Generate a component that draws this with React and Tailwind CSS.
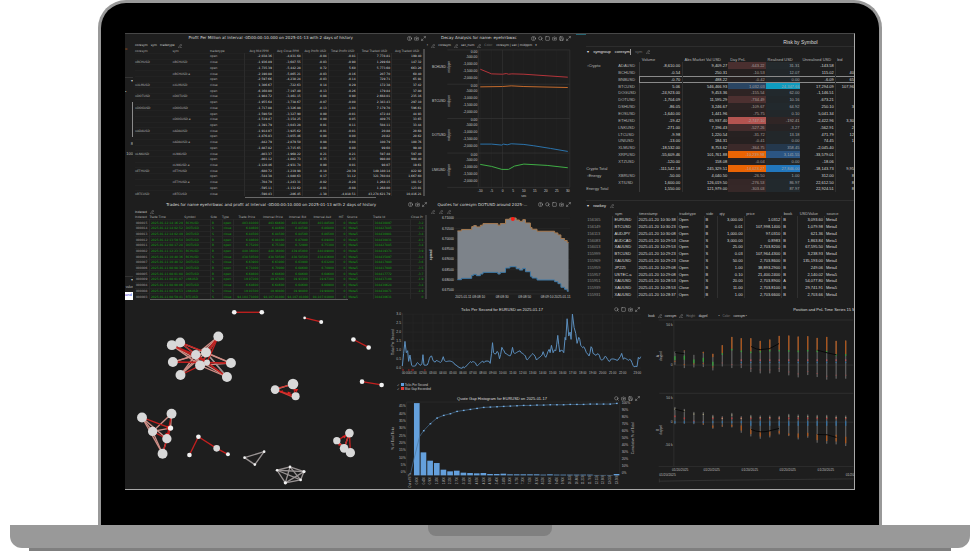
import React from 'react';
import { Camera, CircleHelp, Maximize2, PencilLine, Save, Search, Square } from 'lucide-react';

const icons = {
  help: CircleHelp,
  search: Search,
  square: Square,
  camera: Camera,
  save: Save,
  expand: Maximize2,
};

const profitHeaders = ['Avg Mid PPM', 'Avg Close PPM', 'Avg Profit USD', 'Total Profit USD', 'Total Traded USD', 'Avg Traded USD'];

const profitRows = [
  ['', '', 'open', '-2,038.36', '-4,831.68', '-0.04', '-0.81', '7,778.81', '199.40'],
  ['BCHUSD', 'BCHUSD', 'close', '-1,936.89', '-3,607.55', '-0.03', '-0.90', '1,299.68', '147.32'],
  ['', '', 'open', '-1,735.39', '-5,442.28', '0.72', '5.60', '5,773.60', '663.26'],
  ['', 'BCHUSD.a', 'close', '-2,190.88', '-5,865.21', '-0.03', '-0.16', '207.70', '60.40'],
  ['', '', 'open', '-2,597.66', '-4,230.24', '-0.03', '-0.14', '729.71', '65.91'],
  ['XLMUSD', 'XLMUSD', 'close', '1,306.67', '-722.63', '0.14', '0.29', '172.38', '37.42'],
  ['', '', 'open', '-6,160.80', '-7,197.40', '-0.13', '-0.26', '179.84', '37.80'],
  ['DOTUSD', 'DOTUSD', 'close', '-1,984.72', '-3,461.15', '0.08', '0.90', '2,668.01', '235.16'],
  ['', '', 'open', '-1,955.64', '-3,738.67', '-0.07', '-0.00', '2,383.43', '297.10'],
  ['DOGUSD', 'DOGUSD', 'close', '-1,717.88', '-3,326.88', '-0.13', '-1.04', '7,179.70', '596.61'],
  ['', '', 'open', '-1,590.50', '-3,327.90', '0.00', '-0.01', '472.44', '44.93'],
  ['', 'DOGUSD.a', 'close', '-1,519.47', '-3,154.25', '0.00', '0.05', '409.75', '33.65'],
  ['', '', 'open', '-1,391.79', '-3,043.28', '0.01', '0.11', '504.11', '33.44'],
  ['ADAUSD', 'ADAUSD', 'close', '-1,914.07', '-3,925.62', '-0.01', '-0.01', '20.88', '20.68'],
  ['', '', 'open', '-1,876.83', '-3,055.46', '0.00', '0.00', '20.82', '20.62'],
  ['', 'ADAUSD.a', 'close', '-842.79', '-2,879.50', '0.08', '0.08', '100.79', '100.76'],
  ['', '', 'open', '-1,887.82', '-3,715.65', '0.00', '0.00', '99.60', '99.40'],
  ['LNKUSD', 'LNKUSD', 'close', '-803.37', '-1,968.22', '0.21', '0.21', '597.48', '597.40'],
  ['', '', 'open', '-801.12', '-1,802.73', '0.35', '0.35', '998.80', '998.40'],
  ['', 'LNKUSD.a', 'close', '-1,120.46', '-2,931.74', '0.00', '0.01', '98.07', '19.61'],
  ['ETHUSD', 'ETHUSD', 'close', '-680.72', '-1,219.98', '-0.18', '-28.39', '149,180.14', '822.92'],
  ['', '', 'open', '-544.38', '-1,080.63', '0.17', '31.12', '321,760.04', '1,667.60'],
  ['', 'ETHUSD.a', 'close', '-704.79', '-1,243.31', '-0.02', '-0.28', '1,268.15', '101.52'],
  ['', '', 'open', '-595.11', '-1,132.62', '-0.01', '-0.08', '1,268.00', '123.01'],
  ['BTCUSD', 'BTCUSD', 'close', '-590.43', '-286.45', '-1.38', '-4,818.51', '43,274,621.79', '10,416.21'],
];

const tradeHeaders = ['Indexed', 'Trade Time', 'Symbol', 'Side', 'Type', 'Trade Price', 'Interval Price', 'Interval Bid', 'Interval Ask', 'HIT', 'Source', 'Trade Id', 'Close Pr'];

const tradeRows = [
  ['000015', '2025-01-12 14:16:29', 'BCHUSD', 'B', 'open', '403.81000', '403.68600', '403.85000', '403.88500', '0', 'Meta5', '304430897', '-3.2'],
  ['000014', '2025-01-12 14:02:52', 'DOTUSD', 'S', 'close', '6.84600', '6.84600', '6.84500', '6.86800', '0', 'Meta5', '304427885', '-3.4'],
  ['000013', '2025-01-12 14:02:49', 'DOTUSD', 'S', 'close', '6.84500', '6.84500', '6.84500', '6.86500', '0', 'Meta5', '304430901', '-3.4'],
  ['000012', '2025-01-12 13:59:54', 'DOTUSD', 'B', 'open', '6.88600', '6.88400', '6.87000', '6.89400', '0', 'Meta5', '304430831', '-4.1'],
  ['000011', '2025-01-12 08:17:28', 'DOTUSD', 'B', 'open', '6.75200', '6.75300', '6.72900', '6.75300', '0', 'Meta5', '304427885', '-3.4'],
  ['000002', '2025-01-11 12:23:31', 'BCHUSD', 'B', 'open', '440.36000', '440.36000', '439.85000', '440.89000', '0', 'Meta5', '304419374', '-3.9'],
  ['000001', '2025-01-11 10:40:36', 'BCHUSD', 'S', 'close', '438.50500', '438.50500', '438.50500', '438.83600', '0', 'Meta5', '304435897', '-3.4'],
  ['000007', '2025-01-11 10:40:32', 'DOTUSD', 'S', 'close', '6.63900', '6.63900', '6.63900', '6.63200', '0', 'Meta5', '304417980', '-3.6'],
  ['000006', '2025-01-11 08:08:39', 'DOTUSD', 'B', 'open', '6.71000', '6.70900', '6.68600', '6.70900', '0', 'Meta5', '304417980', '-3.5'],
  ['000005', '2025-01-11 08:01:08', 'DOTUSD', 'B', 'open', '6.68600', '6.68600', '6.68600', '6.68600', '0', 'Meta5', '304417772', '-3.7'],
  ['000009', '2025-01-11 08:01:07', 'LNKUSD', 'B', 'open', '19.97200', '19.97800', '19.93300', '19.97300', '0', 'Meta5', '304437108', '-1.9'],
  ['000004', '2025-01-11 08:00:06', 'DOTUSD', 'S', 'close', '6.64600', '6.64600', '6.64600', '6.66900', '0', 'Meta5', '304430624', '-3.4'],
  ['000008', '2025-01-11 08:59:53', 'LNKUSD', 'S', 'close', '19.91500', '19.90800', '19.90800', '19.90800', '0', 'Meta5', '304430871', '-1.9'],
  ['000003', '2025-01-11 08:59:41', 'BTCUSD', 'S', 'close', '94,104.71000', '94,107.01000', '94,107.01000', '94,107.01000', '0', 'Meta5', '304430631', '0'],
];

const riskRows = [
  { group: 'Crypto', sym: 'ADAUSD', volume: '-8,610.00', abs: '9,409.27', day: '-643.22', dayBg: 'bg-[#4a2f2f]', real: '31.31', realBg: 'bg-[#23292c]', unreal: '-143.58', bid: '' },
  { sym: 'BCHUSD', volume: '-0.54', abs: '250.31', day: '-10.53', dayBg: 'bg-[#262020]', real: '12.07', realBg: 'bg-[#22272a]', unreal: '115.02', bid: '40' },
  { sym: 'BNBUSD', volume: '-0.70', abs: '488.22', day: '-0.42', dayBg: 'bg-[#262020]', real: '0.00', realBg: 'bg-[#22272a]', unreal: '-6.09', bid: '65', selected: true },
  { sym: 'BTCUSD', volume: '5.06', abs: '546,466.93', day: '1,032.03', dayBg: 'bg-[#2a4563]', real: '24,347.66', realBg: 'bg-[#0f9cbf]', unreal: '17,294.09', bid: '107,96' },
  { sym: 'DOGUSD', volume: '-24,923.00', abs: '9,453.36', day: '-155.54', dayBg: 'bg-[#2e2424]', real: '62.00', realBg: 'bg-[#22292d]', unreal: '-1,146.51', bid: '' },
  { sym: 'DOTUSD', volume: '-1,704.09', abs: '11,595.29', day: '-734.49', dayBg: 'bg-[#4c3030]', real: '10.16', realBg: 'bg-[#22272a]', unreal: '-673.21', bid: '' },
  { sym: 'DSHUSD', volume: '-86.05', abs: '3,246.67', day: '-109.67', dayBg: 'bg-[#2c2323]', real: '64.92', realBg: 'bg-[#22292d]', unreal: '250.10', bid: '3' },
  { sym: 'EOSUSD', volume: '-1,640.00', abs: '1,441.96', day: '-75.75', dayBg: 'bg-[#292121]', real: '0.10', realBg: 'bg-[#22272a]', unreal: '5,041.34', bid: '' },
  { sym: 'ETHUSD', volume: '-19.42', abs: '65,937.40', day: '-2,747.10', dayBg: 'bg-[#b35450]', real: '-192.41', realBg: 'bg-[#302525]', unreal: '-2,422.96', bid: '3,30' },
  { sym: 'LNKUSD', volume: '-271.00', abs: '7,196.43', day: '-527.26', dayBg: 'bg-[#432c2c]', real: '-3.27', realBg: 'bg-[#262324]', unreal: '-562.91', bid: '2' },
  { sym: 'LTCUSD', volume: '-9.98', abs: '1,220.54', day: '-31.72', dayBg: 'bg-[#272121]', real: '13.18', realBg: 'bg-[#22272a]', unreal: '471.79', bid: '12' },
  { sym: 'UNIUSD', volume: '-13.00', abs: '184.31', day: '-0.41', dayBg: 'bg-[#262020]', real: '0.00', realBg: 'bg-[#22272a]', unreal: '74.45', bid: '1' },
  { sym: 'XLMUSD', volume: '-18,532.00', abs: '8,753.62', day: '-364.75', dayBg: 'bg-[#3b2929]', real: '358.45', realBg: 'bg-[#24384d]', unreal: '-2,045.40', bid: '' },
  { sym: 'XRPUSD', volume: '-55,609.46', abs: '101,761.88', day: '-10,239.98', dayBg: 'bg-[#ea6404]', real: '3,141.55', realBg: 'bg-[#2b5583]', unreal: '-33,579.01', bid: '' },
  { sym: 'XTZUSD', volume: '-120.00', abs: '158.08', day: '-0.04', dayBg: 'bg-[#262020]', real: '0.00', realBg: 'bg-[#22272a]', unreal: '-18.06', bid: '' },
  { group: 'Crypto Total', total: true, sym: '', volume: '-111,542.18', abs: '245,329.51', day: '-14,023.27', dayBg: 'bg-[#ea6404]', real: '27,846.00', realBg: 'bg-[#2277bd]', unreal: '-18,143.73', bid: '9,95' },
  { group: 'Energy', sym: 'XBRUSD', volume: '-50.00', abs: '4,040.50', day: '-26.50', dayBg: 'bg-[#272121]', real: '1.00', realBg: 'bg-[#22272a]', unreal: '312.00', bid: '8' },
  { sym: 'XTIUSD', volume: '1,600.00', abs: '126,019.50', day: '-276.53', dayBg: 'bg-[#352727]', real: '86.97', realBg: 'bg-[#22292d]', unreal: '22,612.50', bid: '8' },
  { group: 'Energy Total', total: true, sym: '', volume: '1,550.00', abs: '121,979.00', day: '-303.03', dayBg: 'bg-[#362828]', real: '87.97', realBg: 'bg-[#22292d]', unreal: '22,924.51', bid: '8' },
];

const orderHeaders = ['', 'sym', 'timestamp', 'tradetype', 'side', 'qty', 'price', 'book', 'USDValue', 'source'];

const orderRows = [
  ['156165', 'EURUSD', '2025-01-20 10:30:38', 'Open', 'B', '3,000.00', '1.0312', 'B', '3,093.60', 'Meta4'],
  ['156149', 'BTCUSD', '2025-01-20 10:30:23', 'Open', 'B', '0.01', '107,998.1400', 'B', '1,079.98', 'Meta4'],
  ['156113', 'AUDJPY', '2025-01-20 10:30:08', 'Open', 'B', '1,000.00', '97.0310', 'B', '621.36', 'Meta4'],
  ['156083', 'AUDCAD', '2025-01-20 10:29:53', 'Close', 'S', '3,000.00', '0.8983', 'B', '1,863.84', 'Meta1'],
  ['156013', 'XAUUSD', '2025-01-20 10:29:53', 'Open', 'S', '25.00', '2,703.8200', 'B', '67,595.50', 'Meta4'],
  ['155999', 'BTCUSD', '2025-01-20 10:29:23', 'Open', 'S', '0.03', '107,964.4300', 'B', '3,238.93', 'Meta4'],
  ['155969', 'XAUUSD', '2025-01-20 10:29:23', 'Close', 'S', '50.00', '2,703.8600', 'B', '135,193.00', 'Meta4'],
  ['155959', 'JP225', '2025-01-20 10:29:08', 'Open', 'S', '1.00', '38,893.2900', 'B', '249.06', 'Meta4'],
  ['155957', 'USTEC.a', '2025-01-20 10:29:08', 'Open', 'B', '0.10', '21,400.2400', 'B', '2,140.02', 'Meta5'],
  ['155951', 'XAUUSD', '2025-01-20 10:28:53', 'Open', 'S', '20.00', '2,703.8900', 'A', '54,077.80', 'Meta4'],
  ['155939', 'XAUUSD', '2025-01-20 10:28:53', 'Close', 'B', '11.00', '2,703.8100', 'B', '29,741.91', 'Meta5'],
  ['155931', 'XAUUSD', '2025-01-20 10:28:37', 'Open', 'B', '1.00', '2,703.6600', 'B', '2,703.66', 'Meta4'],
];

const IconBar = ({ names }) => (
  <div className="flex shrink-0 items-center gap-[2px] text-[#bdbdbd]">
    {names.map((name, i) => {
      const Icon = icons[name];
      return (
        <button key={i} type="button" aria-label={name}>
          <Icon className="size-[5px]" strokeWidth={2} />
        </button>
      );
    })}
  </div>
);

const PanelTitle = ({ title, tools, className = 'h-2' }) => (
  <div className={`flex shrink-0 items-center ${className}`}>
    <h2 className="flex-1 text-center text-[4px] leading-[6px] whitespace-nowrap text-[#dcdcdc]">{title}</h2>
    {tools && <IconBar names={tools} />}
  </div>
);

const Pen = () => <PencilLine className="size-[4px] text-[#a8a8a8]" strokeWidth={2} />;

const Profit = () => (
  <section className="flex min-h-0 flex-[168] flex-col pr-px pl-[2px] font-['DejaVu_Sans',sans-serif]">
    <PanelTitle title="Profit Per Million at Interval -0D00:00:10.000 on 2025-01-13 with 2 days of history" tools={['help', 'camera', 'expand']} />
    <div className="flex h-[7px] shrink-0 items-center gap-[3px] text-[3px] text-[#d0d0d0]">
      <span>coresym</span>
      <span>sym</span>
      <span>tradetype</span>
      <Pen />
    </div>
    <div className="min-h-0 flex-1 pr-px">
      <table className="h-full w-full table-fixed border-r-2 border-[#4b4b4b] text-[3px] leading-[4px]">
        <colgroup>
          <col className="w-[13%]" />
          <col className="w-[13%]" />
          <col className="w-[12%]" />
          <col className="w-[10%]" />
          <col className="w-[10%]" />
          <col className="w-[9%]" />
          <col className="w-[10%]" />
          <col className="w-[12%]" />
          <col className="w-[11%]" />
        </colgroup>
        <thead>
          <tr className="text-left text-[#b0b0b0]">
            <th className="p-0 font-normal">coresym</th>
            <th className="p-0 font-normal">sym</th>
            <th className="p-0 font-normal">tradetype</th>
            {profitHeaders.map((h) => (
              <th key={h} className="p-0 text-center font-normal whitespace-nowrap">{h}</th>
            ))}
          </tr>
        </thead>
        <tbody>
          {profitRows.map((row, i) => (
            <tr key={i} className="border-t border-[#222222]">
              {row.map((cell, j) => (
                <td key={j} className={j > 2 ? 'border-l border-[#2b2b2b] p-0 pr-px text-right text-[#dcdcdc]' : 'p-0 text-[#b0b0b0]'}>
                  {j < 2 && cell ? `▫${cell}` : cell}
                </td>
              ))}
            </tr>
          ))}
        </tbody>
      </table>
    </div>
    <div className="h-[5px] shrink-0 pt-px">
      <div className="ml-[38%] h-px w-[45%] bg-[#6a6a6a]" />
    </div>
  </section>
);

const Trades = () => (
  <section className="flex min-h-0 flex-[99] flex-col pl-[2px] font-['DejaVu_Sans',sans-serif]">
    <PanelTitle title="Trades for name eyehrrbwxc and profit at Interval -0D00:00:10.000 on 2025-01-13 with 2 days of history" tools={['help', 'camera', 'expand']} className="h-[7px]" />
    <div className="flex h-[7px] shrink-0 items-center gap-[3px] text-[3px] text-[#d0d0d0]">
      <span>Indexed</span>
      <Pen />
    </div>
    <div className="min-h-0 flex-1">
      <table className="h-full w-full table-fixed border-r-2 border-[#3c3c3c] text-[3px] leading-[4px]">
        <colgroup>
          <col className="w-[5%]" />
          <col className="w-[12%]" />
          <col className="w-[9%]" />
          <col className="w-[4%]" />
          <col className="w-[4%]" />
          <col className="w-[9%]" />
          <col className="w-[9%]" />
          <col className="w-[8%]" />
          <col className="w-[9%]" />
          <col className="w-[4%]" />
          <col className="w-[9%]" />
          <col className="w-[13%]" />
          <col className="w-[5%]" />
        </colgroup>
        <thead>
          <tr className="text-[#b0b0b0]">
            {tradeHeaders.map((h, j) => (
              <th key={h} className={`p-0 font-normal whitespace-nowrap ${j > 4 && j < 10 ? 'text-center' : 'text-left'}`}>{h}</th>
            ))}
          </tr>
        </thead>
        <tbody>
          {tradeRows.map((row) => (
            <tr key={row[0]} className="border-t border-[#262626] text-[#14a014]">
              {row.map((cell, j) => (
                <td key={j} className={`border-r border-[#292929] p-0 px-px whitespace-nowrap ${j === 0 ? 'text-[#a2a2a2]' : ''} ${(j > 4 && j < 10) || j === 12 ? 'text-right' : ''}`}>
                  {cell}
                </td>
              ))}
            </tr>
          ))}
        </tbody>
      </table>
    </div>
    <div className="ml-[5%] h-px w-[68%] shrink-0 bg-[#5c5c5c]" />
  </section>
);

const decayFacets = [
  { name: 'BCHUSD', y: 65, color: '#b5343a', points: '169,123 203,137 236,138 247,136 254,138 264,137 300,138 432,147' },
  { name: 'BTCUSD', y: 168, color: '#c46a2c', points: '169,176 236,175 262,173 300,175 432,178' },
  { name: 'DOTUSD', y: 271, color: '#2b72ab', points: '169,348 203,348 234,351 238,348 250,350 262,347 300,349 330,353 380,361 432,370' },
  { name: 'LNKUSD', y: 375, color: '#3fae45', points: '169,409 203,415 234,424 254,424 272,414 300,408 370,412 432,419' },
];

const Decay = () => (
  <section className="flex min-h-0 flex-[168] flex-col font-['DejaVu_Sans',sans-serif]">
    <PanelTitle title="Decay Analysis for name: eyehrrbwxc" tools={['help', 'search', 'square', 'camera', 'save', 'expand']} />
    <div className="flex h-[7px] shrink-0 items-center gap-[3px] text-[3px] text-[#d0d0d0]">
      <span>•</span>
      <Pen />
      <span>coresym</span>
      <Pen />
      <span>sec_num</span>
      <Pen />
      <span className="text-[#7a7a7a]">Color:</span>
      <span>coresym | sec | midppm</span>
      <span>▾</span>
    </div>
    <svg className="min-h-0 w-full flex-1 overflow-visible font-['Liberation_Sans',Arial,sans-serif]" viewBox="9 63 435 456" fontSize="10" fill="#cacaca">
      {[169, 203, 236, 268, 300, 333, 366, 399, 432].map((x, i) => (
        <g key={x}>
          <line x1={x} x2={x} y1="65" y2="478" stroke={i === 2 ? '#343434' : '#242424'} strokeWidth="2" />
          <text x={x} y="491" textAnchor="middle">{i * 5 - 10}</text>
        </g>
      ))}
      <line x1="163" x2="163" y1="65" y2="478" stroke="#353535" strokeWidth="2" />
      <line x1="438" x2="438" y1="65" y2="478" stroke="#353535" strokeWidth="2" />
      {decayFacets.map((f) => (
        <g key={f.name}>
          <line x1="70" x2="438" y1={f.y} y2={f.y} stroke="#363636" strokeWidth="2" />
          <text x="24" y={f.y + 53}>{f.name}</text>
          <text transform={`translate(77 ${f.y + 50}) rotate(-90)`} textAnchor="middle">midppm</text>
          {['0.00', '-500.00', '-1,000.00', '-1,500.00', '-2,000.00'].map((t, i) => (
            <text key={t} x="160" y={f.y + [8, 24, 45, 66, 86][i]} textAnchor="end">{t}</text>
          ))}
          <polyline points={f.points} fill="none" stroke={f.color} strokeWidth="3" />
        </g>
      ))}
      <line x1="70" x2="438" y1="478" y2="478" stroke="#363636" strokeWidth="2" />
      <text x="300" y="506" textAnchor="middle">sec</text>
    </svg>
  </section>
);

const quoteSteps = [
  [115, 108], [127, 104], [158, 95], [164, 92], [172, 96], [184, 91], [192, 86], [237, 91], [244, 86], [260, 73], [273, 69],
  [292, 75], [302, 79], [312, 74], [320, 84], [335, 98], [340, 103], [355, 109], [408, 114], [418, 120], [427, 131], [438, 137], [446, 143], [450, 143],
];

const stepPath = (shift) =>
  quoteSteps.map(([x, y], i) => (i === 0 ? `${x},${y + shift}` : `${x},${quoteSteps[i - 1][1] + shift} ${x},${y + shift}`)).join(' ');

const Quotes = () => (
  <section className="flex min-h-0 flex-[99] flex-col font-['DejaVu_Sans',sans-serif]">
    <PanelTitle title="Quotes for coresym DOTUSD around 2025-..." tools={['help', 'search', 'square', 'camera', 'expand']} className="h-[7px]" />
    <div className="flex h-[7px] shrink-0 items-center gap-[4px] pl-1">
      <Pen />
      <Pen />
      <Pen />
    </div>
    <svg className="min-h-0 w-full flex-1 overflow-visible font-['Liberation_Sans',Arial,sans-serif]" viewBox="24 60 435 255" fontSize="10" fill="#cacaca">
      {['6.71000', '6.70500', '6.70000', '6.69500', '6.69000', '6.68500', '6.68000', '6.67500'].map((t, i) => (
        <g key={t}>
          <text x="104" y={73 + i * 31} textAnchor="end">{t}</text>
          <line x1="108" x2="455" y1={70 + i * 31} y2={70 + i * 31} stroke="#292929" strokeWidth="2" />
        </g>
      ))}
      <polygon points={`${stepPath(0)} ${stepPath(147).split(' ').reverse().join(' ')}`} fill="#7d838a" />
      <polyline points={stepPath(0)} fill="none" stroke="#a97c51" strokeWidth="3" />
      <polyline points={stepPath(147)} fill="none" stroke="#3f7ba8" strokeWidth="3" />
      <circle cx="282" cy="72" r="6" fill="#ff1b14" />
      <line x1="108" x2="455" y1="298" y2="298" stroke="#353535" strokeWidth="2" />
      <text transform="translate(38 180) rotate(-90)" textAnchor="middle" fontWeight="bold">spread</text>
      <text x="108" y="310">2025.01.11 08:08:10</text>
      <text x="250" y="310" textAnchor="middle">08:08:30</text>
      <text x="318" y="310" textAnchor="middle">08:08:50</text>
      <text x="366" y="310">08:09:10</text>
      <text x="456" y="310" textAnchor="end">2025.01.11</text>
    </svg>
  </section>
);

// rule above and below a selected row, painted inside the cells so the row keeps its height
const selectedCell = 'shadow-[inset_0_1px_#8a8a8a,inset_0_-1px_#8a8a8a]';

const Risk = () => (
  <section className="flex min-h-0 flex-[166] flex-col pb-2">
    <h2 className="h-[12px] shrink-0 pt-[5px] pl-[60%] text-center text-[5px] leading-[7px] text-[#dcdcdc]">Risk by Symbol</h2>
    <div className="flex h-[11px] shrink-0 items-center gap-[4px] border-t border-[#2d2d2d] pl-px text-[4px] text-[#e0e0e0]">
      <span>▾</span>
      <span>symgroup</span>
      <span className="border-r border-[#9a9a9a]">coresym</span>
      <span className="text-[#6b6b6b]">sym</span>
      <Pen />
    </div>
    <div className="min-h-0 flex-1">
      <table className="h-full w-full table-fixed text-[4px] leading-[5px] text-[#dadada]">
        <colgroup>
          <col className="w-[12%]" />
          <col className="w-[8%]" />
          <col className="w-[16%]" />
          <col className="w-[17%]" />
          <col className="w-[14%]" />
          <col className="w-[13%]" />
          <col className="w-[13%]" />
          <col className="w-[7%]" />
        </colgroup>
        <thead>
          <tr className="text-left text-[#b4b4b4]">
            <th className="p-0" />
            <th className="p-0" />
            {['Volume', 'Abs Market Val USD', 'Day PnL', 'Realised USD', 'Unrealised USD', 'bid'].map((h) => (
              <th key={h} className="p-0 pl-[2px] font-normal whitespace-nowrap">{h}</th>
            ))}
          </tr>
        </thead>
        <tbody>
          {riskRows.map((r, i) => {
            const mark = r.selected ? selectedCell : '';
            return (
              <tr key={i} className="text-right">
                <td className={`p-0 text-left whitespace-nowrap text-[#b4b4b4] ${r.total ? '' : 'pl-px'}`}>{r.group && !r.total ? `▫${r.group}` : r.group}</td>
                <td className="p-0 text-left text-[#b4b4b4]">{r.sym}</td>
                <td className={`border-l p-0 pr-[2px] ${r.selected ? 'border-[#8a8a8a]' : 'border-[#3a3a3a]'} ${mark}`}>{r.volume}</td>
                <td className={`border-l border-[#2f2f2f] p-0 pr-px ${mark}`}>{r.abs}</td>
                <td className={`p-0 pr-px text-[#a9a09e] ${r.dayBg} ${mark}`}>{r.day}</td>
                <td className={`p-0 pr-px text-[#a3a8ac] ${r.realBg} ${mark}`}>{r.real}</td>
                <td className={`border-r border-[#2f2f2f] p-0 pr-px ${mark}`}>{r.unreal}</td>
                <td className={`p-0 ${mark}`}>{r.bid}</td>
              </tr>
            );
          })}
        </tbody>
      </table>
    </div>
  </section>
);

const Orders = () => (
  <section className="flex min-h-0 flex-[101] flex-col border-t border-[#2d2d2d] pb-[2px]">
    <div className="flex h-[10px] shrink-0 items-center gap-[4px] pl-px text-[4px] text-[#e0e0e0]">
      <span>▾</span>
      <span>rowkey</span>
      <Pen />
    </div>
    <div className="min-h-0 flex-1">
      <table className="h-full w-full table-fixed text-[4px] leading-[5px] text-[#dadada]">
        <colgroup>
          <col className="w-[10%]" />
          <col className="w-[9%]" />
          <col className="w-[15%]" />
          <col className="w-[10%]" />
          <col className="w-[5%]" />
          <col className="w-[10%]" />
          <col className="w-[14%]" />
          <col className="w-[6%]" />
          <col className="w-[10%]" />
          <col className="w-[11%]" />
        </colgroup>
        <thead>
          <tr className="text-left text-[#b4b4b4]">
            {orderHeaders.map((h) => (
              <th key={h} className="p-0 pl-[2px] font-normal">{h}</th>
            ))}
          </tr>
        </thead>
        <tbody>
          {orderRows.map((row) => (
            <tr key={row[0]}>
              {row.map((cell, j) => (
                <td key={j} className={`border-[#303030] p-0 whitespace-nowrap ${j < 9 ? 'border-r' : ''} ${j === 0 ? 'text-[#8e8e8e]' : ''} ${[5, 6, 8].includes(j) ? 'pr-px text-right' : 'pl-px'}`}>
                  {cell}
                </td>
              ))}
            </tr>
          ))}
        </tbody>
      </table>
    </div>
  </section>
);

const nodes = [
  [343, 37, 7], [426, 37, 7], [555, 54, 4], [605, 66, 6], [702, 119, 7], [748, 143, 7], [728, 246, 7], [787, 256, 7],
  [155, 136, 15], [180, 128, 15], [295, 110, 15], [227, 165, 14], [258, 158, 15], [158, 187, 15], [261, 188, 9], [240, 197, 15],
  [333, 190, 15], [181, 226, 15], [321, 232, 15], [520, 253, 16], [466, 270, 13], [528, 290, 12],
  [65, 354, 15], [154, 343, 15], [97, 396, 14], [151, 386, 8], [140, 418, 14], [127, 463, 15],
  [235, 412, 7], [208, 467, 7], [290, 447, 10], [324, 465, 6], [690, 401, 13], [652, 424, 11], [674, 447, 13], [693, 460, 14],
  [374, 475, 4], [433, 457, 4], [405, 496, 4], [472, 513, 4], [511, 503, 4], [553, 517, 5], [543, 542, 4], [497, 551, 5],
];

const redLinks = [
  [0, 1], [2, 3], [4, 5], [6, 7], [8, 14], [9, 14], [10, 14], [13, 14], [16, 14], [18, 14], [17, 14], [11, 18], [13, 16], [9, 12], [8, 11], [10, 12], [15, 10],
  [20, 21], [19, 21], [22, 25], [23, 26], [24, 26], [25, 27], [28, 29], [28, 30], [30, 31],
  [32, 33], [32, 34], [33, 34], [32, 35],
];

const pinkLinks = [
  [8, 18], [9, 16], [10, 17], [11, 10], [11, 13], [11, 17], [12, 17], [12, 16], [15, 16], [15, 18], [15, 8], [12, 18], [13, 12],
  [20, 19], [22, 26], [22, 24], [22, 27], [23, 24], [23, 25], [24, 25], [24, 27], [26, 27], [32, 34], [33, 35], [34, 35],
];

const greyLinks = [
  [36, 37], [37, 38], [36, 38], [39, 40], [40, 41], [41, 42], [42, 43], [39, 43], [39, 42], [40, 43], [40, 42], [39, 41], [41, 43], [10, 15], [9, 11], [12, 18],
];

const Links = ({ pairs, ...line }) =>
  pairs.map(([a, b], i) => <line key={i} x1={nodes[a][0]} y1={nodes[a][1]} x2={nodes[b][0]} y2={nodes[b][1]} {...line} />);

const Network = () => (
  <section className="min-h-0 min-w-0 flex-[265]">
    <svg className="h-full w-full" viewBox="15 0 795 570">
      <Links pairs={pinkLinks} stroke="#d08f87" strokeWidth="4" />
      <Links pairs={greyLinks} stroke="#9a9494" strokeWidth="4" />
      <Links pairs={redLinks} stroke="#c4201f" strokeWidth="4" />
      <path d="M466 268L528 252M476 274L524 294" stroke="#d23a34" strokeWidth="4" />
      <path d="M140 378 l10 8 l-12 4z M135 400 l14 2 l-6 12z M504 276 l12 4 l-12 5z M478 276 l12 -4 l-3 9z M524 268 l12 0 l-6 10z M656 432 l10 2 l-8 7z M680 408 l-12 2 l8 7z" fill="#e02322" />
      {nodes.map(([x, y, r], i) => (
        <circle key={i} cx={x} cy={y} r={r} fill={r > 8 ? '#d8d8d8' : '#f2f2f2'} />
      ))}
    </svg>
  </section>
);

const tickKeys = [
  [67, 198], [71, 160], [75, 124], [79, 158], [83, 152], [86, 184], [90, 165], [95, 196], [110, 190], [122, 196], [126, 190], [129, 164], [132, 195],
  [145, 188], [155, 168], [166, 186], [185, 184], [190, 170], [197, 184], [225, 194], [250, 200], [275, 188], [290, 196], [312, 188], [331, 190],
  [335, 160], [338, 128], [341, 158], [352, 154], [359, 176], [366, 142], [376, 160], [394, 162], [398, 142], [404, 160], [424, 158], [440, 178],
  [462, 164], [470, 180], [490, 155], [498, 172], [508, 148], [511, 158], [515, 136], [520, 158], [528, 152], [534, 106], [540, 156], [552, 158],
  [556, 112], [558, 120], [562, 56], [567, 108], [571, 96], [574, 118], [578, 42], [583, 82], [588, 100], [592, 130], [597, 112], [603, 136],
  [612, 140], [620, 158], [628, 168], [634, 140], [640, 160], [652, 162], [662, 176], [675, 170], [690, 184], [715, 180], [726, 160], [731, 178],
  [750, 178], [760, 196], [772, 200], [776, 172], [783, 170],
];

// fills the stretch between two keys with a small saw so the line keeps its noise
const tickPoints = tickKeys.flatMap(([x, y], i) => {
  const next = tickKeys[i + 1];
  if (!next) return [`${x},${y}`];
  const steps = Math.max(1, Math.floor((next[0] - x) / 3));
  return Array.from({ length: steps }, (_, s) => {
    const t = s / steps;
    const noise = s === 0 ? 0 : Math.sin((x + s) * 12.9) * 6;
    return `${x + (next[0] - x) * t},${y + (next[1] - y) * t + noise}`;
  });
});

const Ticks = () => (
  <svg className="min-h-0 w-full flex-[63] overflow-visible" viewBox="30 39 765 189" fontSize="10" fill="#bdbdbd">
    {['3.0', '2.5', '2.0', '1.5', '1.0', '0.5', '0.0'].map((t, i) => (
      <g key={t}>
        <text x="63" y={46 + i * 27} textAnchor="end">{t}</text>
        <line x1="67" x2="785" y1={42 + i * 27} y2={42 + i * 27} stroke="#272727" strokeWidth="2" />
      </g>
    ))}
    {Array.from({ length: 24 }, (_, h) => (
      <g key={h}>
        <line x1={69 + h * 30} x2={69 + h * 30} y1="42" y2="210" stroke="#272727" strokeWidth="2" />
        <text x={h === 23 ? 773 : h === 0 ? 77 : 69 + h * 30} y="223" textAnchor="middle" fontSize="9">{`${String(h).padStart(2, '0')}:00`}</text>
      </g>
    ))}
    <line x1="67" x2="67" y1="39" y2="212" stroke="#3a3a3a" strokeWidth="2" />
    <text transform="translate(41 126) rotate(-90)" textAnchor="middle">Ticks Per Second</text>
    <polyline points={tickPoints.join(' ')} fill="none" stroke="#5b8fbe" strokeWidth="3" />
    <path d="M67 210h5M84 210h5M94 210h8M132 210h5" stroke="#b3201f" strokeWidth="3" />
  </svg>
);

const barTops = [312, 460, 485, 492, 512, 517, 515, 521, 522, 523, 522, 525, 525, 524, 526, 526, 526, 526, 526, 527, 526, 527, 527, 527, 527, 527, 527, 528, 528, 528, 525];
const cumulative = [412, 395, 374, 357, 349, 344, 337, 334, 331, 328, 325, 324, 323, 322, 321, 320, 319, 319, 318, 318, 317, 317, 317, 316, 316, 316, 315, 315, 315, 315, 313];

const Histogram = () => (
  <svg className="min-h-0 w-full flex-[87] overflow-visible" viewBox="30 309 765 261" fontSize="10" fill="#bdbdbd">
    {Array.from({ length: 10 }, (_, i) => (
      <text key={i} x="77" y={325 + i * 22} textAnchor="end">{`${45 - i * 5}%`}</text>
    ))}
    {Array.from({ length: 11 }, (_, i) => (
      <text key={i} x="726" y={316 + i * 21}>{`${100 - i * 10}%`}</text>
    ))}
    <path d="M80 309H720M80 528H720M80 309V528M720 309V528" stroke="#2e2e2e" strokeWidth="2" />
    {barTops.map((y, i) => (
      <g key={i}>
        <rect x={102 + i * 20} y={y} width="17" height={529 - y} fill="#64a0dc" />
        <text transform={`translate(${114 + i * 20} 556) rotate(-90)`} fontSize="9">{(i * 0.45).toFixed(3)}</text>
      </g>
    ))}
    <text transform="translate(93 566) rotate(-90)" fontSize="9">Out of 97%</text>
    <polyline points={`91,527 102,480 ${cumulative.map((y, i) => `${i === 0 ? 119 : 111 + i * 20},${y}`).join(' ')}`} fill="none" stroke="#4a7299" strokeWidth="2" />
    {cumulative.slice(1).map((y, i) => (
      <rect key={i} x={129 + i * 20} y={y - 2} width="5" height="4" fill="#76b1e8" />
    ))}
    <text transform="translate(41 418) rotate(-90)" textAnchor="middle">% of Total Ticks</text>
    <text transform="translate(764 418) rotate(-90)" textAnchor="middle">Cumulative % of Total</text>
  </svg>
);

const TickPanel = () => (
  <section className="flex min-h-0 min-w-0 flex-[255] flex-col pt-[7px]">
    <PanelTitle title="Ticks Per Second for EURUSD on 2025-01-17" tools={['search', 'square', 'camera', 'expand']} className="h-[6px] pr-1" />
    <Ticks />
    <ul className="mt-[7px] shrink-0 pl-[7px] text-[3px] leading-[4px] text-[#c4c4c4]">
      <li className="flex items-center gap-px">
        <span>✓</span>
        <span className="size-[3px] bg-[#5ea0e0]" />
        Ticks Per Second
      </li>
      <li className="flex items-center gap-px">
        <span>✓</span>
        <span className="size-[3px] bg-[#e23a34]" />
        Max Gap Exceeded
      </li>
    </ul>
    <PanelTitle title="Quote Gap Histogram for EURUSD on 2025-01-17" tools={['search', 'camera', 'save', 'expand']} className="mt-[5px] h-[6px] pr-1" />
    <Histogram />
  </section>
);

// top, end of the orange part, bottom
const upperBars = [
  [155, 155, 195], [152, 154, 205], [165, 165, 203], [156, 160, 202], [162, 172, 212], [136, 160, 200], [111, 147, 205], [115, 152, 205], [115, 155, 217], [123, 153, 221],
  [119, 150, 221], [108, 150, 217], [107, 151, 227], [110, 152, 233], [109, 150, 226], [114, 152, 232], [111, 153, 240], [123, 163, 237], [122, 163, 237],
];
// top, start of the orange part, bottom
const lowerBars = [
  [322, 374, 374], [328, 373, 373], [337, 374, 374], [338, 372, 376], [346, 378, 388], [350, 378, 382], [340, 376, 384], [350, 378, 400], [346, 388, 411], [348, 396, 418],
  [348, 396, 414], [349, 394, 405], [343, 402, 410], [345, 402, 420], [345, 400, 415], [346, 404, 430], [346, 406, 433], [348, 406, 435], [348, 412, 440],
];

const Position = () => (
  <section className="flex min-h-0 min-w-0 flex-[210] flex-col overflow-hidden pt-[7px]">
    <h2 className="h-[6px] shrink-0 pl-[71%] text-[4px] leading-[6px] whitespace-nowrap text-[#dcdcdc]">Position and PnL Time Series 15 Minutes</h2>
    <div className="flex h-[6px] shrink-0 items-center gap-[3px] pl-1 text-[3px] text-[#d0d0d0]">
      <span>book</span>
      <Pen />
      <span>coresym</span>
      <Pen />
      <span className="text-[#7a7a7a]">Height:</span>
      <span>daypnl</span>
      <span className="pl-2">•</span>
      <span className="text-[#7a7a7a]">Color:</span>
      <span>coresym •</span>
    </div>
    <svg className="min-h-0 w-full flex-1" viewBox="15 57 630 513" fontSize="10" fill="#bdbdbd">
      <path d="M58 60H645M103 196H645M60 281H645M103 368H645M58 502H645M104 60V502" stroke="#353535" strokeWidth="2" fill="none" />
      <text x="100" y="78" textAnchor="end">50 k</text>
      <text x="100" y="199" textAnchor="end">0</text>
      <text x="100" y="299" textAnchor="end">50 k</text>
      <text x="100" y="370" textAnchor="end">0</text>
      <text x="100" y="440" textAnchor="end">-50 k</text>
      <text transform="translate(58 169) rotate(-90)" textAnchor="middle">A</text>
      <text transform="translate(67 169) rotate(-90)" textAnchor="middle">daypnl</text>
      <text transform="translate(58 391) rotate(-90)" textAnchor="middle">B</text>
      <text transform="translate(67 391) rotate(-90)" textAnchor="middle">daypnl</text>
      {upperBars.map(([top, mid, bottom], i) => {
        const x = 105 + i * 28.6;
        return (
          <g key={i}>
            <rect x={x} y={top} width="4" height={bottom - top} fill="#5d5d5d" />
            <rect x={x} y={top} width="4" height={mid - top} fill="#a9551d" />
            <rect x={x} y={i < 5 ? mid + 14 : mid} width="4" height={i < 5 ? 12 : 5} fill="#36a03a" />
            {i > 6 && <rect x={x} y="179" width="4" height="4" fill="#c4515a" />}
            {i > 6 && <rect x={x} y="186" width="4" height="4" fill="#356f9e" />}
            <rect x={x} y={bottom - 12} width="4" height="3" fill={i < 5 ? '#a9551d' : '#8a4b4b'} />
          </g>
        );
      })}
      {lowerBars.map(([top, mid, bottom], i) => {
        const x = 105 + i * 28.6;
        return (
          <g key={i}>
            <rect x={x} y={top} width="4" height={bottom - top} fill="#5d5d5d" />
            <rect x={x} y={mid} width="4" height={(bottom - mid) * 0.7} fill="#a9551d" />
            <rect x={x} y={i < 4 ? top + 26 : 354} width="4" height="5" fill="#b93a3a" />
            <rect x={x} y={top + 5} width="4" height="3" fill="#a8a27c" />
            <rect x={x} y="365" width="4" height={i < 8 ? 6 : 14} fill="#356f9e" />
          </g>
        );
      })}
      <g fill="none" stroke="#080808" strokeWidth="3">
        <path d="M108 158L136 162M337 140L352 147Q364 151 378 148L393 146L421 131M537 151L566 159L594 165" />
        <path d="M108 329L136 336M337 390Q364 402 393 394L421 387M537 405L566 406L594 414" />
      </g>
      {[123, 218, 333, 447, 562].map((x) => (
        <text key={x} x={x} y="514" textAnchor="middle">01/20/2025</text>
      ))}
      <text x="60" y="530">01/20/2025</text>
      <text x="622" y="530">01/20/2025</text>
      <path d="M60 538V550M60 546L230 543L645 539" stroke="#3d3d3d" strokeWidth="2" fill="none" />
    </svg>
  </section>
);

const SideStrip = () => (
  <aside className="flex min-w-0 flex-[8] flex-col overflow-hidden text-right text-[4px] leading-[5px] text-[#bdbdbd]">
    <span className="mt-[12px] text-left text-[#a2541c]">o</span>
    <span className="mt-[26px] border-t border-[#333333]">▾</span>
    <span className="mt-[6px] text-left">•</span>
    <span className="mt-[8px] h-[35px] w-px self-end bg-[#8a8a8a]" />
    <span className="mt-[4px]">8</span>
    <span className="mt-[5px]">100</span>
    <span className="mt-auto border-t border-[#333333]">▾</span>
    <span className="mt-[3px] text-[3px]">value</span>
    <span className="mt-[2px] h-2 shrink-0 bg-white text-left text-[#3434d8]">and</span>
  </aside>
);

const Dashboard = () => (
  <main className="flex aspect-[730/457] w-full flex-col overflow-hidden border-t border-r border-b border-t-[#474747] border-r-[#a8a8a8] border-b-[#a8a8a8] bg-[#1e1e1e]">
    <div className="flex min-h-0 flex-[267]">
      <SideStrip />
      <div className="flex min-w-0 flex-[296] flex-col">
        <Profit />
        <Trades />
      </div>
      <div className="flex min-w-0 flex-[146] flex-col">
        <Decay />
        <Quotes />
      </div>
      <div className="min-w-0 flex-[10] pl-[5px]">
        <div className="h-px bg-[#256472]" />
      </div>
      <div className="flex min-w-0 flex-[270] flex-col">
        <Risk />
        <Orders />
      </div>
    </div>
    <div className="flex min-h-0 flex-[190]">
      <Network />
      <TickPanel />
      <Position />
    </div>
  </main>
);

export default function App() {
  return (
    <div className="flex min-h-screen flex-col items-center overflow-hidden bg-white font-['Liberation_Sans',Arial,sans-serif]">
      <div className="w-4/5 rounded-t-[28px] border-x-3 border-t-3 border-[#999999] bg-black px-6 pt-[30px] pb-[35px]">
        <Dashboard />
      </div>
      <div className="flex h-[23px] w-[98%] justify-center rounded-b-xl bg-[#999999]">
        <div className="h-[11px] w-[13%] rounded-b-lg bg-[#808080]" />
      </div>
      <div className="h-[3px] w-[94%] bg-[#7f7f7f]" />
    </div>
  );
}
